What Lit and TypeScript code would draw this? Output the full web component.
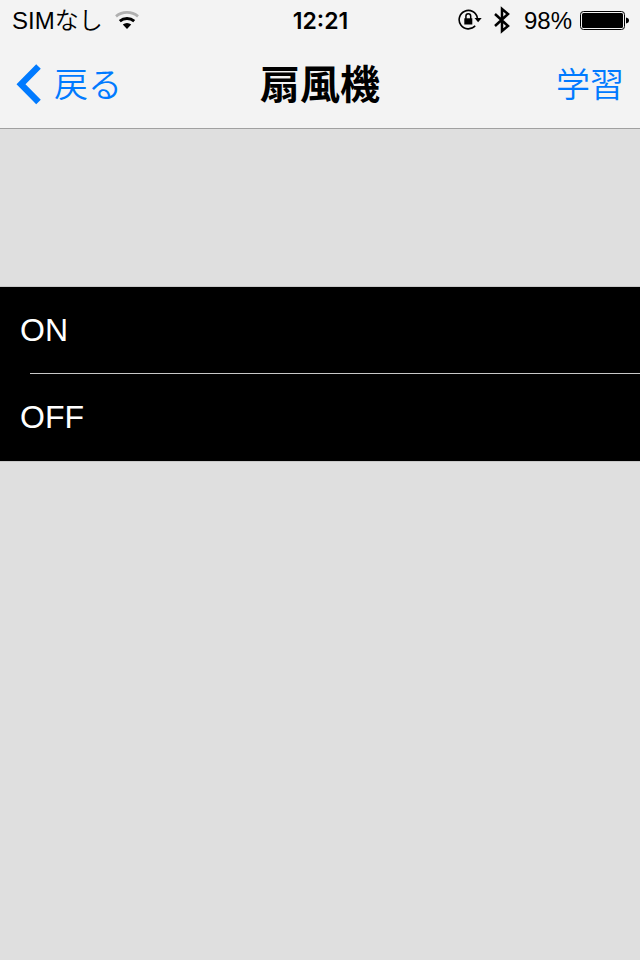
import { LitElement, html, css } from "lit";
import { customElement, property } from "lit/decorators.js";

@customElement("status-bar")
class StatusBar extends LitElement {
  static styles = css`
    :host {
      display: grid;
      grid-template-columns: 1fr auto 1fr;
      align-items: center;
      height: 40px;
      padding: 0 11px 0 12px;
      font-size: 24px;
      line-height: 32px;
      white-space: nowrap;
    }
    svg {
      display: block;
      flex: none;
    }
    .text {
      padding-top: 2px;
    }
    .side {
      display: flex;
      align-items: center;
      gap: 12px;
    }
    .carrier {
      font-weight: 350;
    }
    .right {
      justify-content: flex-end;
    }
    .time {
      font-family: Inter, "Liberation Sans", sans-serif;
      font-size: 23px;
      font-weight: 600;
    }
    .power {
      display: flex;
      align-items: center;
      gap: 8px;
      margin-left: 2px;
    }
  `;

  render() {
    return html`
      <div class="side">
        <span class="text carrier">SIMなし</span>
        <svg width="24" height="20" viewBox="0 0 24 20" fill="none" aria-label="Wi-Fi">
          <path d="M1 6.300a17.500 17.500 0 0 1 22 0" stroke="#b0b0b0" stroke-width="2.800" />
          <path d="M4.800 11.200a11.300 11.300 0 0 1 14.400 0" stroke="#000" stroke-width="3" />
          <path d="M7.800 14.600a6.200 6.200 0 0 1 8.400 0L12 19z" fill="#000" />
        </svg>
      </div>
      <span class="text time">12:21</span>
      <div class="side right">
        <svg width="24" height="22" viewBox="0 0 24 22" fill="none" aria-label="回転ロック">
          <path d="M17.2 16.800A9.200 9.200 0 1 1 19.4 9" stroke="#000" stroke-width="1.600" />
          <path d="M16.500 9h7.200l-3.600 4.200z" fill="#000" />
          <path d="M6.300 9.300h8v6.200h-8z" fill="#000" />
          <path d="M7.900 10V7.200a2.400 2.400 0 0 1 4.800 0V10" stroke="#000" stroke-width="1.500" />
        </svg>
        <svg width="16" height="28" viewBox="0 0 16 28" fill="none" aria-label="Bluetooth">
          <path d="M1 8l13 12-6 5V3l6 5L1 20" stroke="#000" stroke-width="2.500" />
        </svg>
        <div class="power">
          <span class="text">98%</span>
          <svg width="49" height="20" viewBox="0 0 49 20" fill="none" aria-label="バッテリー">
            <rect x="0.5" y="1.500" width="44" height="18" rx="3" stroke="#000" />
            <rect x="2" y="3" width="41" height="15" rx="1.500" fill="#000" />
            <path d="M46 7.500c2 .3 3 1.500 3 3s-1 2.700-3 3z" fill="#000" />
          </svg>
        </div>
      </div>
    `;
  }
}

@customElement("nav-bar")
class NavBar extends LitElement {
  @property() heading = "";

  static styles = css`
    :host {
      display: grid;
      grid-template-columns: 1fr auto 1fr;
      align-items: center;
      height: 88px;
      padding: 0 16px;
    }
    h1 {
      margin: 0;
      padding-top: 2px;
      font-size: 40px;
      line-height: 60px;
      font-weight: 700;
    }
    button {
      display: flex;
      align-items: center;
      gap: 13px;
      padding: 0;
      border: 0;
      background: none;
      color: #007aff;
      font: inherit;
      font-size: 34px;
      font-weight: 350;
      line-height: 60px;
    }
    .label {
      padding-top: 2px;
    }
    .back {
      justify-self: start;
    }
    .learn {
      justify-self: end;
    }
  `;

  render() {
    return html`
      <button class="back">
        <svg width="25" height="42" viewBox="0 0 25 42" fill="none" aria-hidden="true">
          <path d="M22.500 3.500L5 21.200 22.500 39" stroke="#007aff" stroke-width="6.400" />
        </svg>
        <span class="label">戻る</span>
      </button>
      <h1>${this.heading}</h1>
      <button class="learn"><span class="label">学習</span></button>
    `;
  }
}

@customElement("app-root")
class AppRoot extends LitElement {
  private commands = ["ON", "OFF"];

  static styles = css`
    :host {
      display: block;
      min-height: 100vh;
      background: #dfdfdf;
      color: #000;
      font-family: "Liberation Sans", "Noto Sans CJK JP", sans-serif;
    }
    header {
      background: #f3f3f3;
      border-bottom: 1px solid #a0a0a0;
    }
    ul {
      margin: 157px 0 0;
      padding: 0;
      list-style: none;
      background: #000;
      border-top: 1px solid #c8c8c8;
      border-bottom: 1px solid #c8c8c8;
    }
    .command {
      display: block;
      width: 100%;
      height: 86px;
      padding: 0 20px;
      border: 0;
      background: none;
      color: #fff;
      font: inherit;
      font-size: 32px;
      line-height: 84px;
      text-align: left;
    }
    li::after {
      content: "";
      display: block;
      height: 1px;
      margin-left: 30px;
      background: #c8c8c8;
    }
    li:last-child::after {
      background: none;
    }
  `;

  render() {
    return html`
      <header>
        <status-bar></status-bar>
        <nav-bar heading="扇風機"></nav-bar>
      </header>
      <main>
        <ul>
          ${this.commands.map(
            (name) => html`<li><button class="command">${name}</button></li>`
          )}
        </ul>
      </main>
    `;
  }
}
